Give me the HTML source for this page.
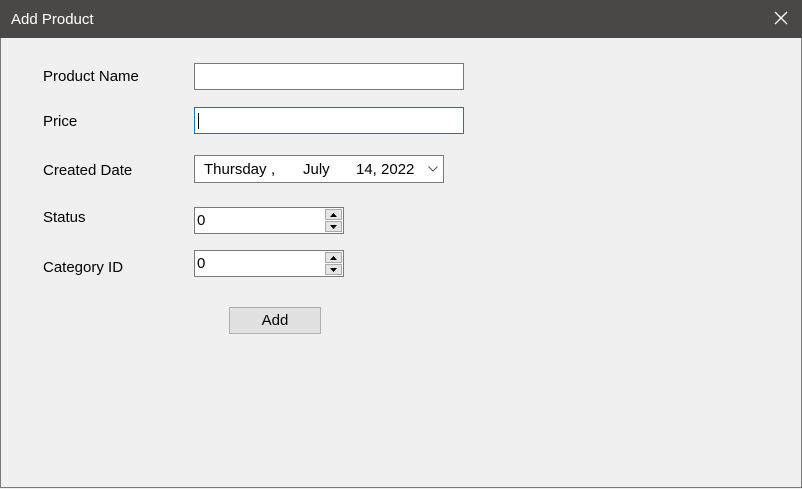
<!DOCTYPE html>
<html><head><style>
body{margin:0;width:802px;height:489px;overflow:hidden;background:#f0f0f0;font-family:"Liberation Sans",sans-serif;font-size:15px;color:#000;position:relative}
.win{position:absolute;left:0;top:0;width:800px;height:487px;border:1px solid #7a7a7a;border-top:none}
.title{position:absolute;left:0;top:0;width:802px;height:38px;background:#4a4846;color:#fff;font-size:15px}
.title span{position:absolute;left:11px;top:11px}
.x{position:absolute;left:772px;top:9px;width:18px;height:18px}
.l{position:absolute;left:43px}
.box{position:absolute;background:#fff;border:1px solid #7a7a7a;box-sizing:border-box}
.spin{position:absolute;right:1px;width:17px;height:11px;background:#e5e5e5;border:1px solid #aaa;box-sizing:border-box}
.t{position:absolute;font-size:15px}
</style></head><body>
<div class="win"></div>
<div class="title"><span>Add Product</span>
<svg class="x" viewBox="0 0 18 18"><path d="M3 3L15 15M15 3L3 15" stroke="#fff" stroke-width="1.3"/></svg></div>
<div class="l" style="top:68px">Product Name</div>
<div class="l" style="top:113px">Price</div>
<div class="l" style="top:162px">Created Date</div>
<div class="l" style="top:209px">Status</div>
<div class="l" style="top:259px">Category ID</div>
<div class="box" style="left:194px;top:63px;width:270px;height:27px"></div>
<div class="box" style="left:194px;top:107px;width:270px;height:27px;border-color:#0078d7"><div style="position:absolute;left:3px;top:5px;width:1px;height:16px;background:#000"></div></div>
<div class="box" style="left:194px;top:155px;width:250px;height:28px">
<span class="t" style="left:9px;top:5px">Thursday</span><span class="t" style="left:76px;top:5px">,</span>
<span class="t" style="left:108px;top:5px">July</span><span class="t" style="left:161px;top:5px">14, 2022</span>
<svg style="position:absolute;left:233px;top:10px" width="10" height="6"><path d="M0.5 0.5L5 5L9.5 0.5" stroke="#555" fill="none"/></svg></div>
<div class="box" style="left:194px;top:207px;width:150px;height:27px"><span class="t" style="left:2px;top:4px">0</span>
<div class="spin" style="top:1px"><svg width="15" height="9" style="position:absolute;left:0;top:0"><path d="M4 7L7.5 3L11 7Z" fill="#000"/></svg></div>
<div class="spin" style="top:13px"><svg width="15" height="9" style="position:absolute;left:0;top:0"><path d="M4 3L7.5 7L11 3Z" fill="#000"/></svg></div></div>
<div class="box" style="left:194px;top:250px;width:150px;height:27px"><span class="t" style="left:2px;top:4px">0</span>
<div class="spin" style="top:1px"><svg width="15" height="9" style="position:absolute;left:0;top:0"><path d="M4 7L7.5 3L11 7Z" fill="#000"/></svg></div>
<div class="spin" style="top:13px"><svg width="15" height="9" style="position:absolute;left:0;top:0"><path d="M4 3L7.5 7L11 3Z" fill="#000"/></svg></div></div>
<div style="position:absolute;left:229px;top:307px;width:92px;height:27px;box-sizing:border-box;background:#e1e1e1;border:1px solid #adadad;text-align:center;line-height:25px">Add</div>
</body></html>
